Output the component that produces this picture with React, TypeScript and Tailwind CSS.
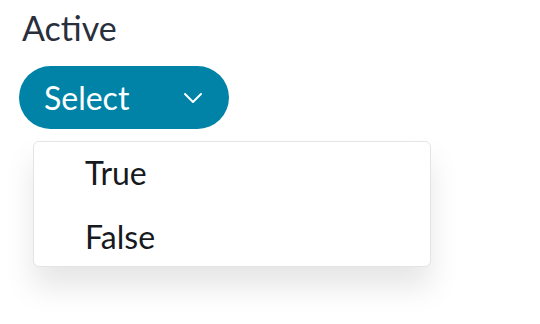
import { ChevronDown } from "lucide-react";

export default function App() {
  return (
    <div
      className="w-[540px] h-[324px] bg-white pl-[19px] pt-[8px]"
      style={{ fontFamily: "Lato, 'Noto Sans', sans-serif" }}
    >
      <label className="block pl-[3px] text-[34px] leading-[40px] text-[#2a2f3c]">Active</label>
      <div className="relative mt-[18px] w-[210px]">
        <button className="flex h-[63px] w-[210px] items-center justify-between rounded-full bg-[#0083a6] pl-[25px] pr-[20px] text-[32px] text-white">
          <span>Select</span>
          <ChevronDown className="h-[32px] w-[32px]" strokeWidth={1.5} />
        </button>
        <ul className="absolute left-[14px] top-[75px] w-[398px] rounded-[6px] border border-[#e2e4e8] bg-white shadow-[0_20px_30px_rgba(0,0,0,0.10)]">
          <li className="h-[62px] pl-[51px] text-[32px] leading-[62px] text-[#16191d]">True</li>
          <li className="h-[62px] pl-[51px] pt-[2px] text-[32px] leading-[62px] text-[#16191d]">False</li>
        </ul>
      </div>
    </div>
  );
}
